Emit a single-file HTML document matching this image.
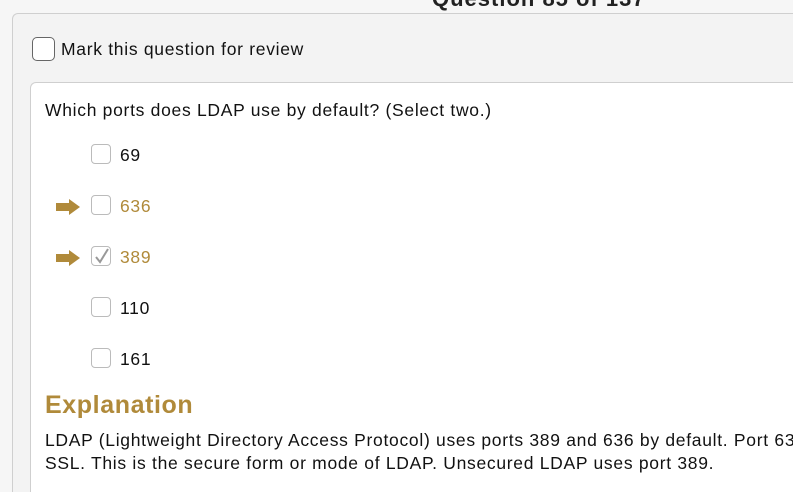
<!DOCTYPE html>
<html><head><meta charset="utf-8"><style>
html,body{margin:0;padding:0;width:793px;height:492px;overflow:hidden;background:#f6f6f6;font-family:"Liberation Sans",sans-serif;color:#111;position:relative}
.title{position:absolute;left:432px;top:-14px;font-size:22px;font-weight:bold;color:#222;white-space:nowrap;letter-spacing:1px}
.outer{position:absolute;left:12px;top:13px;width:781px;height:479px;box-sizing:border-box;background:#f3f3f3;border:1px solid #cfcfcf;border-right:none;border-bottom:none;border-radius:6px 0 0 0}
.inner{position:absolute;left:30px;top:82px;width:763px;height:410px;box-sizing:border-box;background:#fff;border:1px solid #cfcfcf;border-right:none;border-bottom:none;border-radius:6px 0 0 0}
.cb{position:absolute;width:20px;height:20px;border:1px solid #999;border-radius:4px;background:#fff;box-sizing:border-box}
.t{position:absolute;font-size:17.5px;white-space:nowrap;letter-spacing:0.7px}
.gold{color:#b08a3a}
.arrow{position:absolute;width:24px;height:16px}
.clip{position:absolute;left:0;top:0;width:793px;height:492px;overflow:hidden}
</style></head><body><div class="clip">
<div class="title">Question 85 of 137</div>
<div class="outer"></div>
<div class="cb" style="left:32px;top:37px;width:23px;height:24px;border-color:#666;border-radius:5px"></div>
<div class="t" style="left:61px;top:39px">Mark this question for review</div>
<div class="inner"></div>
<div class="t" style="left:45px;top:100px">Which ports does LDAP use by default? (Select two.)</div>

<div class="cb" style="left:91px;top:144px;border-color:#bbb"></div><div class="t" style="left:120px;top:145px">69</div>
<svg class="arrow" style="left:56px;top:199px" viewBox="0 0 24 16"><path d="M0 4H13V0L24 8L13 16V12H0Z" fill="#b08a3a"/></svg>
<div class="cb" style="left:91px;top:195px;border-color:#bbb"></div><div class="t gold" style="left:120px;top:196px">636</div>
<svg class="arrow" style="left:56px;top:250px" viewBox="0 0 24 16"><path d="M0 4H13V0L24 8L13 16V12H0Z" fill="#b08a3a"/></svg>
<div class="cb" style="left:91px;top:246px;border-color:#bbb"></div>
<svg style="position:absolute;left:92px;top:246px" width="20" height="20" viewBox="0 0 20 20"><path d="M4 11L8 16L16 3" fill="none" stroke="#999" stroke-width="2"/></svg>
<div class="t gold" style="left:120px;top:247px">389</div>
<div class="cb" style="left:91px;top:297px;border-color:#bbb"></div><div class="t" style="left:120px;top:298px">110</div>
<div class="cb" style="left:91px;top:348px;border-color:#bbb"></div><div class="t" style="left:120px;top:349px">161</div>

<div class="t gold" style="left:45px;top:391px;font-size:25px;font-weight:bold;letter-spacing:0.6px">Explanation</div>
<div class="t" style="left:45px;top:430px;width:748px;overflow:hidden">LDAP (Lightweight Directory Access Protocol) uses ports 389 and 636 by default. Port 636 uses</div>
<div class="t" style="left:45px;top:453px">SSL. This is the secure form or mode of LDAP. Unsecured LDAP uses port 389.</div>
</div></body></html>
